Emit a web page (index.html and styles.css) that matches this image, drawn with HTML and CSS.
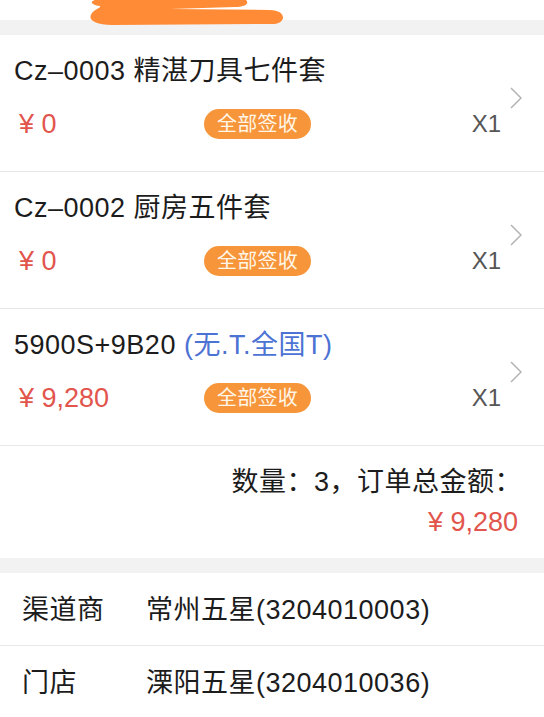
FILE: index.html
```html
<!DOCTYPE html>
<html>
	<head>
		<meta charset="UTF-8">
		<title>订单详情</title>
		<link rel="stylesheet" href="styles.css">
	</head>
	<body>
		<div class="top">
			<svg class="scribble" width="300" height="30" viewBox="0 0 300 30">
				<path d="M95,0 H246 C250,4 244,7 235,7 L170,9 L270,10 C286,10 287,23 274,24 L112,25 C94,25 87,19 92,13 C95,9 101,8 100,6 C92,5 89,2 95,0 Z" fill="#ff8b36"/>
			</svg>
		</div>
		<div class="gap"></div>

		<ul class="goods">
			<li class="item">
				<div class="item-main">
					<p class="title">Cz–0003 精湛刀具七件套</p>
					<div class="info">
						<span class="price">¥ 0</span>
						<span class="badge">全部签收</span>
						<span class="count">X1</span>
					</div>
				</div>
				<svg class="arrow" width="12" height="22" viewBox="0 0 12 22"><polyline points="1,1 11,11 1,21" fill="none" stroke="#b3b3b3" stroke-width="1.5"/></svg>
			</li>
			<li class="item">
				<div class="item-main">
					<p class="title">Cz–0002 厨房五件套</p>
					<div class="info">
						<span class="price">¥ 0</span>
						<span class="badge">全部签收</span>
						<span class="count">X1</span>
					</div>
				</div>
				<svg class="arrow" width="12" height="22" viewBox="0 0 12 22"><polyline points="1,1 11,11 1,21" fill="none" stroke="#b3b3b3" stroke-width="1.5"/></svg>
			</li>
			<li class="item">
				<div class="item-main">
					<p class="title">5900S+9B20 <span class="spec">(无.T.全国T)</span></p>
					<div class="info">
						<span class="price">¥ 9,280</span>
						<span class="badge">全部签收</span>
						<span class="count">X1</span>
					</div>
				</div>
				<svg class="arrow" width="12" height="22" viewBox="0 0 12 22"><polyline points="1,1 11,11 1,21" fill="none" stroke="#b3b3b3" stroke-width="1.5"/></svg>
			</li>
		</ul>

		<div class="summary">
			<p>数量：3，订单总金额：</p>
			<p class="total">¥ 9,280</p>
		</div>
		<div class="gap"></div>

		<ul class="rows">
			<li><span class="label">渠道商</span><span>常州五星(3204010003)</span></li>
			<li><span class="label">门店</span><span>溧阳五星(3204010036)</span></li>
		</ul>
	</body>
</html>
```

FILE: styles.css
```css
*{
	padding: 0;margin: 0;
}
body{
	background: #fff;
	color: #1c1c1c;
	font-family: "Liberation Sans", "Noto Sans CJK SC", sans-serif;
	font-size: 27px;
	letter-spacing: 0.5px;
}
ul{
	list-style: none;
}
.top{
	height: 20px;
	position: relative;
}
.scribble{
	position: absolute;left: 0;top: 0;
}
.gap{
	height: 15px;
	background: #f2f2f2;
}
.item{
	display: flex;
	align-items: center;
	padding: 20px 22px 31px 14px;
	border-bottom: 1px solid #e8e8e8;
}
.item-main{
	flex: 1;
}
.title{
	line-height: 32px;
	white-space: nowrap;
}
.spec{
	color: #4c72d4;
}
.info{
	display: grid;
	grid-template-columns: 1fr auto 1fr;
	align-items: center;
	height: 32px;
	margin-top: 21px;
}
.price{
	color: #e2554d;
	padding-left: 5px;
	letter-spacing: 0;
}
.badge{
	height: 30px;
	line-height: 30px;
	padding: 0 13px;
	border-radius: 15px;
	background: #f7953a;
	color: #fff6e8;
	font-size: 20px;
	letter-spacing: 0.3px;
}
.count{
	justify-self: end;
	color: #555;
	font-size: 24px;
	letter-spacing: 0;
}
.arrow{
	margin-left: 9px;
}
.summary{
	padding: 20px 22px 20px 0;
	text-align: right;
	line-height: 32px;
}
.total{
	margin-top: 8px;
	color: #e2554d;
	padding-right: 4px;
	letter-spacing: 0;
}
.rows li{
	display: flex;
	padding: 22px 22px 20px;
	line-height: 30px;
	border-bottom: 1px solid #e8e8e8;
}
.rows .label{
	width: 124px;
}
```
